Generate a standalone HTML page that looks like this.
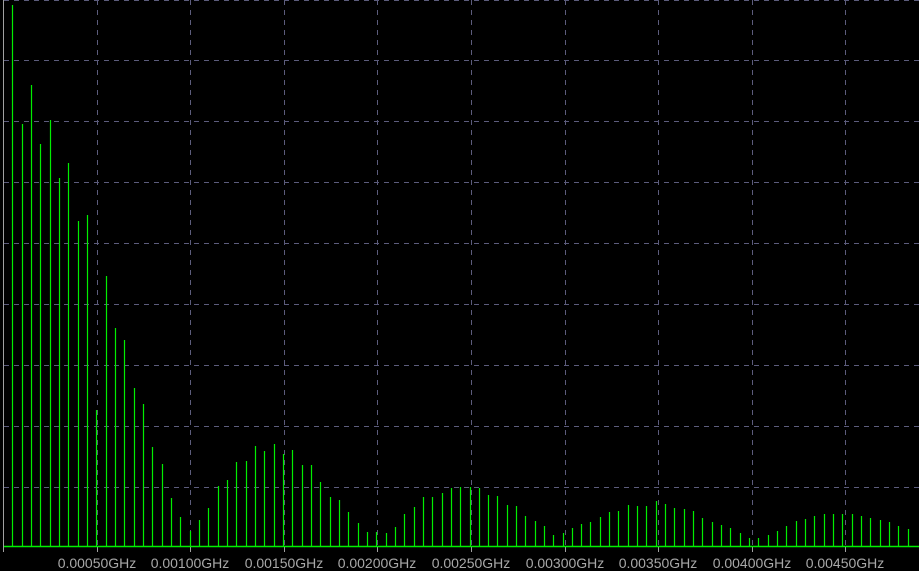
<!DOCTYPE html>
<html><head><meta charset="utf-8"><style>
html,body{margin:0;padding:0;background:#000;width:919px;height:571px;overflow:hidden}
svg{display:block}
text{font-family:"Liberation Sans",sans-serif;font-size:14px;fill:#a8a8a8;text-anchor:middle}
</style></head><body>
<svg width="919" height="571" viewBox="0 0 919 571" xmlns="http://www.w3.org/2000/svg">
<g stroke="#5c5c7c" stroke-width="1" stroke-dasharray="5,5">
<line x1="4" y1="0.5" x2="919" y2="0.5"/>
<line x1="4" y1="60.5" x2="919" y2="60.5"/>
<line x1="4" y1="121.5" x2="919" y2="121.5"/>
<line x1="4" y1="182.5" x2="919" y2="182.5"/>
<line x1="4" y1="243.5" x2="919" y2="243.5"/>
<line x1="4" y1="304.5" x2="919" y2="304.5"/>
<line x1="4" y1="365.5" x2="919" y2="365.5"/>
<line x1="4" y1="426.5" x2="919" y2="426.5"/>
<line x1="4" y1="487.5" x2="919" y2="487.5"/>
<line x1="97.5" y1="0" x2="97.5" y2="546"/>
<line x1="190.5" y1="0" x2="190.5" y2="546"/>
<line x1="284.5" y1="0" x2="284.5" y2="546"/>
<line x1="377.5" y1="0" x2="377.5" y2="546"/>
<line x1="471.5" y1="0" x2="471.5" y2="546"/>
<line x1="565.5" y1="0" x2="565.5" y2="546"/>
<line x1="658.5" y1="0" x2="658.5" y2="546"/>
<line x1="752.5" y1="0" x2="752.5" y2="546"/>
<line x1="845.5" y1="0" x2="845.5" y2="546"/>
</g>
<g stroke="#a0a0a0" stroke-width="1">
<line x1="3.5" y1="0" x2="3.5" y2="552"/>
<line x1="97.5" y1="546" x2="97.5" y2="552"/>
<line x1="190.5" y1="546" x2="190.5" y2="552"/>
<line x1="284.5" y1="546" x2="284.5" y2="552"/>
<line x1="377.5" y1="546" x2="377.5" y2="552"/>
<line x1="471.5" y1="546" x2="471.5" y2="552"/>
<line x1="565.5" y1="546" x2="565.5" y2="552"/>
<line x1="658.5" y1="546" x2="658.5" y2="552"/>
<line x1="752.5" y1="546" x2="752.5" y2="552"/>
<line x1="845.5" y1="546" x2="845.5" y2="552"/>
</g>
<path stroke="#00ee00" stroke-width="1.2" fill="none" d="
M12.5 546V5 M22.5 546V124 M31.5 546V85 M40.5 546V144 M50.5 546V120 M59.5 546V178 M68.5 546V163 M78.5 546V221 M87.5 546V215 M96.5 546V410 M106.5 546V276 M115.5 546V328 M124.5 546V340 M134.5 546V388 M143.5 546V404 M152.5 546V447 M162.5 546V464 M171.5 546V498 M180.5 546V517 M190.5 546V531 M199.5 546V520 M208.5 546V508 M218.5 546V486 M227.5 546V480 M236.5 546V462 M246.5 546V461 M255.5 546V446 M264.5 546V451 M274.5 546V444 M283.5 546V454 M292.5 546V450 M302.5 546V465 M311.5 546V465 M320.5 546V482 M330.5 546V497 M339.5 546V500 M348.5 546V512 M358.5 546V523 M367.5 546V532 M376.5 546V532 M386.5 546V533 M395.5 546V527 M404.5 546V514 M414.5 546V507 M423.5 546V497 M432.5 546V497 M442.5 546V493 M451.5 546V488 M460.5 546V487 M470.5 546V487 M479.5 546V488 M488.5 546V495 M497.5 546V496 M507.5 546V505 M516.5 546V506 M525.5 546V516 M535.5 546V521 M544.5 546V526 M553.5 546V535 M563.5 546V533 M572.5 546V528 M581.5 546V524 M590.5 546V522 M600.5 546V517 M609.5 546V512 M618.5 546V511 M628.5 546V505 M637.5 546V506 M646.5 546V506 M656.5 546V501 M665.5 546V504 M674.5 546V508 M684.5 546V509 M693.5 546V511 M702.5 546V518 M712.5 546V522 M721.5 546V525 M730.5 546V528 M740.5 546V533 M749.5 546V538 M758.5 546V538 M768.5 546V535 M777.5 546V531 M786.5 546V526 M796.5 546V521 M805.5 546V519 M814.5 546V516 M824.5 546V514 M833.5 546V514 M842.5 546V514 M852.5 546V514 M861.5 546V516 M870.5 546V518 M880.5 546V520 M889.5 546V522 M898.5 546V526 M908.5 546V529"/>
<line x1="4" y1="546.5" x2="919" y2="546.5" stroke="#00ee00" stroke-width="1.5"/>
<text x="97" y="568">0.00050GHz</text>
<text x="190" y="568">0.00100GHz</text>
<text x="284" y="568">0.00150GHz</text>
<text x="377" y="568">0.00200GHz</text>
<text x="471" y="568">0.00250GHz</text>
<text x="565" y="568">0.00300GHz</text>
<text x="658" y="568">0.00350GHz</text>
<text x="752" y="568">0.00400GHz</text>
<text x="845" y="568">0.00450GHz</text>
</svg>
</body></html>
